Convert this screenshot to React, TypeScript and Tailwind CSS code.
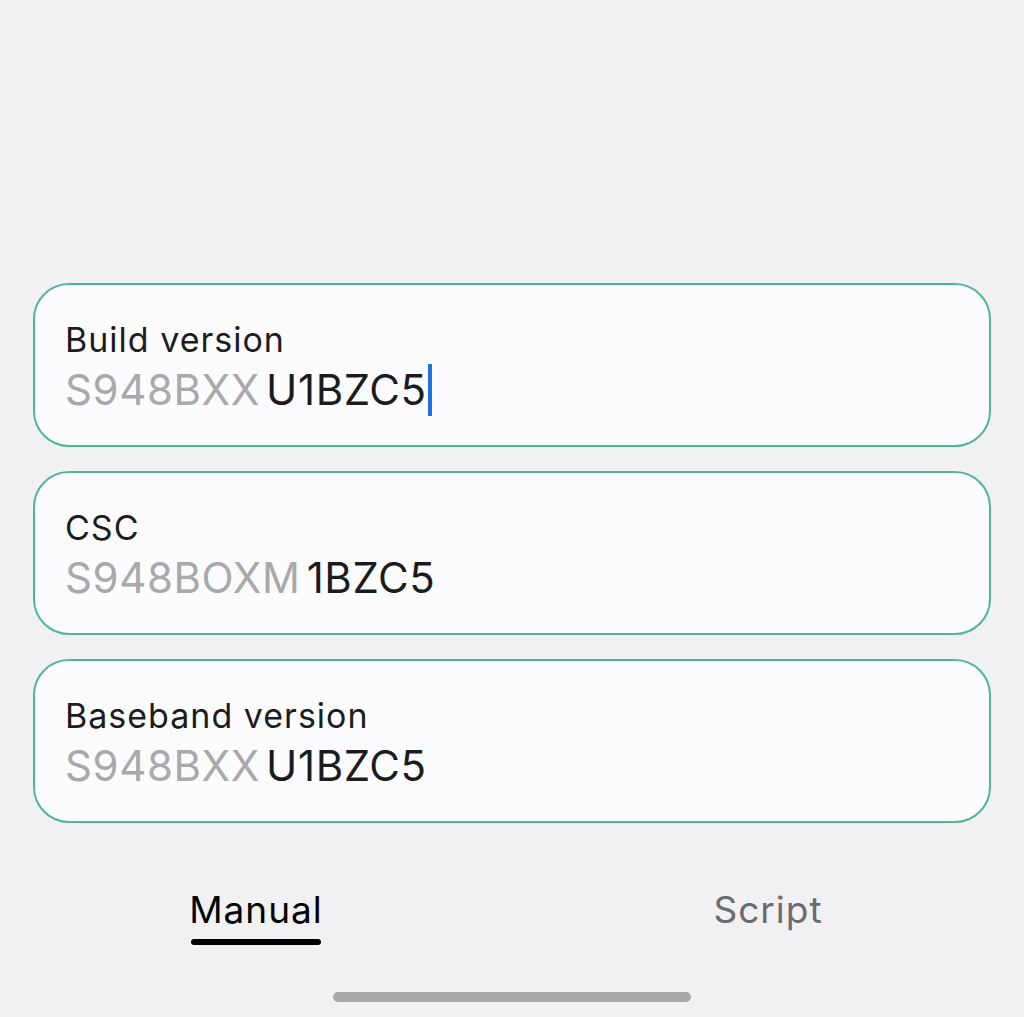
const fields = [
  { label: "Build version", prefix: "S948BXX", value: "U1BZC5", focused: true },
  { label: "CSC", prefix: "S948BOXM", value: "1BZC5", focused: false },
  { label: "Baseband version", prefix: "S948BXX", value: "U1BZC5", focused: false },
];

const App = () => {
  return (
    <div className="h-[1017px] w-[1024px] bg-[#f1f1f3] flex flex-col font-['Inter','Noto_Sans',sans-serif] overflow-hidden">
      {/* Fields */}
      <div className="mt-[283px] px-[33px] flex flex-col gap-[24px]">
        {fields.map((field) => (
          <div
            key={field.label}
            className="h-[164px] rounded-[36px] border-[2.5px] border-[#4fb793] bg-[#fcfcfe] pl-[30px] pt-[6px] flex flex-col justify-center"
          >
            <div className="text-[34px] leading-[40px] text-[#1c1c1e] tracking-[1px]">{field.label}</div>
            <div className="flex items-center text-[42px] leading-[52px] mt-[4px] tracking-[0.6px]">
              <span className="text-[#a9a9ab]">{field.prefix}</span>
              <span className="ml-[6px] text-[#1c1c1e]">{field.value}</span>
              {field.focused && <span className="ml-[1px] w-[4px] h-[52px] bg-[#1a73e8]" />}
            </div>
          </div>
        ))}
      </div>

      {/* Tabs */}
      <div className="mt-[64px] grid grid-cols-2">
        <div className="flex flex-col items-center">
          <span className="text-[37px] leading-[46px] tracking-[1px] text-black">Manual</span>
          <span className="mt-[6px] h-[6px] w-[130px] rounded-full bg-black" />
        </div>
        <div className="flex flex-col items-center">
          <span className="text-[37px] leading-[46px] tracking-[1px] text-[#6b6b6d]">Script</span>
        </div>
      </div>

      {/* Home indicator */}
      <div className="mt-auto mb-[15px] flex justify-center">
        <span className="h-[10px] w-[358px] rounded-full bg-[#a8a8aa]" />
      </div>
    </div>
  );
};

export default App;
